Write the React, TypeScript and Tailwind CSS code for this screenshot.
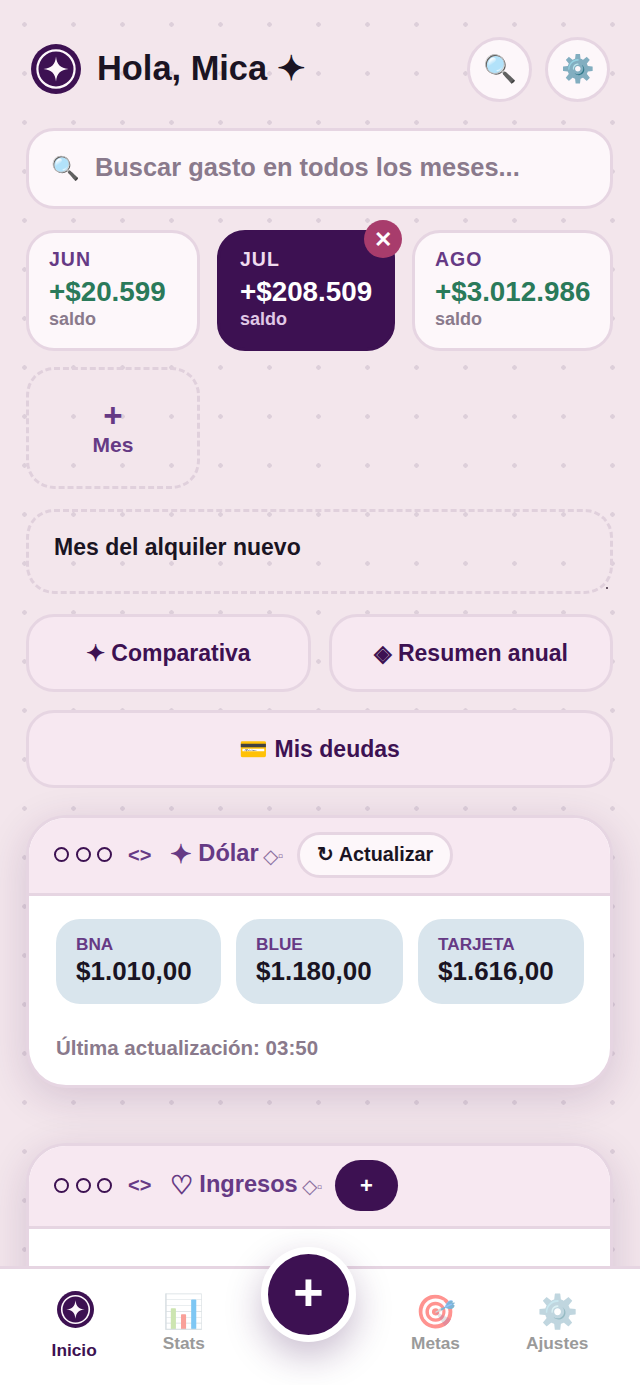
const font = { fontFamily: '"Liberation Sans", sans-serif' };

function Logo({ size, className }: { size: number; className?: string }) {
  return (
    <svg width={size} height={size} viewBox="0 0 50 50" className={className}>
      <circle cx="25" cy="25" r="25" fill="#3d1152" />
      <circle cx="25" cy="25" r="18.6" fill="none" stroke="#fdf7fb" strokeWidth="2.2" />
      <path d="M25 12.5 C25.8 20.6 29.4 24.2 37.5 25 C29.4 25.8 25.8 29.4 25 37.5 C24.2 29.4 20.6 25.8 12.5 25 C20.6 24.2 24.2 20.6 25 12.5Z" fill="#fdf7fb" />
    </svg>
  );
}

function MonthCard({ m, v, w, active }: { m: string; v: string; w: string; active?: boolean }) {
  return (
    <div className={`relative h-[121px] rounded-[28px] pl-[20px] pt-[14px] ${w} ${active ? "bg-[#3d1152] border-[3px] border-[#3d1152]" : "bg-[#fdf7fa] border-[3px] border-[#e6d5e2]"}`}>
      <div className={`text-[19.5px] leading-[24px] font-bold tracking-[1px] ${active ? "text-[#f0dcef]" : "text-[#663a85]"}`}>{m}</div>
      <div className={`mt-[4px] text-[27.8px] leading-[34px] font-bold whitespace-nowrap ${active ? "text-white" : "text-[#2a7a5a]"}`}>{v}</div>
      <div className={`-mt-[1px] text-[18px] leading-[22px] font-bold ${active ? "text-[#e0c8e6]" : "text-[#8a7a8c]"}`}>saldo</div>
      {active && (
        <div className="absolute -top-[13px] -right-[10px] w-[38px] h-[38px] rounded-full bg-[#a83c6c] flex items-center justify-center text-white text-[22px] font-bold">✕</div>
      )}
    </div>
  );
}

function WindowHeader({ title, glyph, children, h }: { title: string; glyph: string; children: React.ReactNode; h: string }) {
  return (
    <div className={`flex items-center pl-[25px] bg-[#f7e8f1] border-b-[3px] border-[#e6d5e2] ${h}`}>
      <div className="flex gap-[6.5px] -mt-[2px]">
        <span className="w-[15px] h-[15px] rounded-full border-[2.5px] border-[#3d1152]" />
        <span className="w-[15px] h-[15px] rounded-full border-[2.5px] border-[#3d1152]" />
        <span className="w-[15px] h-[15px] rounded-full border-[2.5px] border-[#3d1152]" />
      </div>
      <span className="ml-[16px] text-[#663a85] text-[20px] font-bold -mt-[2px]">&lt;&gt;</span>
      <span className="ml-[19px] text-[#663a85] text-[26px] font-bold leading-none -mt-[3px]">{glyph}</span>
      <span className="ml-[6px] text-[#663a85] text-[23.6px] font-bold whitespace-nowrap -mt-[3px]">{title}</span>
      <span className="ml-[4px] text-[#8a6fa0] text-[20px] leading-none">◇</span>
      <span className="text-[#8a6fa0] text-[15px] leading-none">▫</span>
      {children}
    </div>
  );
}

function Rate({ n, v, w }: { n: string; v: string; w: string }) {
  return (
    <div className={`h-[85px] rounded-[24px] bg-[#d9e5ed] pl-[20px] pt-[15px] ${w}`}>
      <div className="text-[17.2px] leading-[20px] font-bold text-[#663a85]">{n}</div>
      <div className="mt-[1px] text-[26px] leading-[32px] font-bold text-[#1a1423]">{v}</div>
    </div>
  );
}

function NavItem({ icon, label }: { icon: string; label: string }) {
  return (
    <div className="flex flex-col items-center pt-[22px]">
      <div className="text-[33px] leading-[41px] opacity-50">{icon}</div>
      <div className="text-[17.3px] leading-[22px] font-bold text-[#9a9a9a]">{label}</div>
    </div>
  );
}

export default function App() {
  return (
    <div className="relative w-[640px] h-[1385px] overflow-hidden bg-[#f3e6ec]" style={font}>
      <div className="absolute inset-0 bg-[radial-gradient(#ddcfda_2px,transparent_2.5px)] bg-[size:49px_49px]" />
      <div className="relative pl-[26px] pr-[27px] pt-[36px]">
        <header className="flex items-center h-[66px] pl-[5px] pr-[3px]">
          <Logo size={50} />
          <h1 className="ml-[16px] text-[34.4px] font-bold text-[#1a1423] whitespace-nowrap">Hola, Mica ✦</h1>
          <div className="ml-auto flex gap-[13px]">
            <div className="w-[65px] h-[65px] rounded-full bg-[#fdf7fa] border-[3px] border-[#e6d5e2] flex items-center justify-center text-[27px]">🔍</div>
            <div className="w-[65px] h-[65px] rounded-full bg-[#fdf7fa] border-[3px] border-[#e6d5e2] flex items-center justify-center text-[27px]">⚙️</div>
          </div>
        </header>
        <div className="mt-[26px] h-[81px] rounded-[28px] bg-[#fdf7fa] border-[3px] border-[#e6d5e2] flex items-center pl-[22px]">
          <span className="text-[23px]">🔍</span>
          <span className="ml-[15px] -mt-[2px] text-[25.4px] font-bold text-[#8a7a8c]">Buscar gasto en todos los meses...</span>
        </div>
        <div className="mt-[21px] flex gap-[17px]">
          <MonthCard m="JUN" v="+$20.599" w="w-[174px]" />
          <MonthCard m="JUL" v="+$208.509" w="w-[178px]" active />
          <MonthCard m="AGO" v="+$3.012.986" w="w-[201px]" />
        </div>
        <div className="mt-[16px] w-[174px] h-[122px] pt-[3px] rounded-[28px] border-[3px] border-dashed border-[#e0d0dc] flex flex-col items-center justify-center text-[#663a85] font-bold">
          <span className="text-[33px] leading-[30px]">+</span>
          <span className="text-[21px] leading-[28px]">Mes</span>
        </div>
        <div className="relative mt-[20px] h-[85px] pb-[8px] rounded-[28px] border-[3px] border-dashed border-[#e0d0dc] flex items-center pl-[25px] text-[23px] font-bold text-[#1a1423]">
          Mes del alquiler nuevo
          <span className="absolute right-[2px] bottom-[2px] w-[2px] h-[2px] rounded-full bg-[#3d2a3d]" />
        </div>
        <div className="mt-[20px] flex gap-[18px]">
          <div className="flex-1 h-[78px] rounded-[28px] bg-[#f7e8f1] border-[3px] border-[#e6d5e2] flex items-center justify-center text-[23px] font-bold text-[#3d1152]">✦ Comparativa</div>
          <div className="flex-1 h-[78px] rounded-[28px] bg-[#f7e8f1] border-[3px] border-[#e6d5e2] flex items-center justify-center text-[23px] font-bold text-[#3d1152]">◈ Resumen anual</div>
        </div>
        <div className="mt-[18px] h-[78px] rounded-[28px] bg-[#f7e8f1] border-[3px] border-[#e6d5e2] flex items-center justify-center text-[23px] font-bold text-[#3d1152]">💳 Mis deudas</div>
        <section className="mt-[27px] rounded-[40px] overflow-hidden bg-white border-[3px] border-[#e6d5e2] shadow-[0_10px_40px_rgba(61,17,82,0.16)]">
          <WindowHeader title="Dólar" glyph="✦" h="h-[78px]">
            <div className="ml-[14px] -mt-[1px] h-[46px] px-[17px] rounded-full bg-[#fdf7fa] border-[3px] border-[#e6d5e2] flex items-center text-[19.8px] font-bold text-[#1a1423] whitespace-nowrap">↻ Actualizar</div>
          </WindowHeader>
          <div className="pl-[27px] pr-[26px] pt-[23px] h-[189px]">
            <div className="flex gap-[15px]">
              <Rate n="BNA" v="$1.010,00" w="w-[165px]" />
              <Rate n="BLUE" v="$1.180,00" w="w-[167px]" />
              <Rate n="TARJETA" v="$1.616,00" w="w-[166px]" />
            </div>
            <div className="mt-[29px] text-[20.5px] font-bold text-[#8a7a8c]">Última actualización: 03:50</div>
          </div>
        </section>
        <section className="mt-[55px] h-[300px] rounded-[40px] overflow-hidden bg-white border-[3px] border-[#e6d5e2] shadow-[0_10px_40px_rgba(61,17,82,0.16)]">
          <WindowHeader title="Ingresos" glyph="♡" h="h-[83px]">
            <div className="ml-[13px] -mt-[2px] w-[63px] h-[51px] rounded-full bg-[#3d1152] flex items-center justify-center text-white text-[22px] font-bold">+</div>
          </WindowHeader>
        </section>
      </div>
      <nav className="absolute left-0 right-0 bottom-0 h-[119px] bg-white border-t-[3px] border-[#e6d5e2] flex justify-center gap-[66px]">
        <div className="flex flex-col items-center pt-[22px]">
          <Logo size={37} className="ml-[2px]" />
          <div className="mt-[11px] text-[17.3px] leading-[22px] font-bold text-[#3d1152]">Inicio</div>
        </div>
        <NavItem icon="📊" label="Stats" />
        <div className="w-[74px]" />
        <NavItem icon="🎯" label="Metas" />
        <NavItem icon="⚙️" label="Ajustes" />
      </nav>
      <div className="absolute left-[261px] top-[1247px] w-[95px] h-[95px] pb-[6px] rounded-full bg-[#3d1152] border-[7px] border-white shadow-[0_14px_36px_rgba(61,17,82,0.28)] flex items-center justify-center text-white text-[52px] font-bold leading-none">+</div>
    </div>
  );
}
